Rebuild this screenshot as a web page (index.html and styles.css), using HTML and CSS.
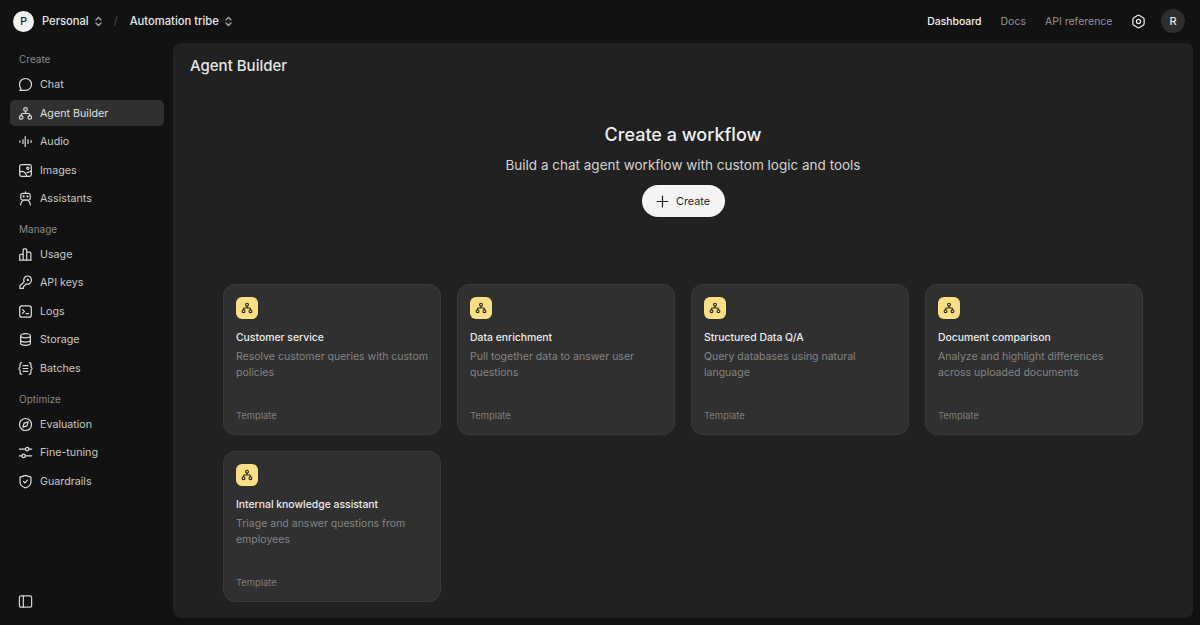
FILE: index.html
```html
<!DOCTYPE html>
<html lang="en">
<head>
<meta charset="utf-8">
<title>Agent Builder</title>
<link rel="stylesheet" href="styles.css">
</head>
<body>
<svg class="defs" width="0" height="0" aria-hidden="true">
  <symbol id="tree" viewBox="0 0 16 16"><circle cx="8" cy="3.6" r="1.9"/><circle cx="3.4" cy="12.2" r="1.9"/><circle cx="12.6" cy="12.2" r="1.9"/><path d="M8 5.5V8M3.4 10.3V9.2a1.2 1.2 0 0 1 1.2-1.2h6.8a1.2 1.2 0 0 1 1.2 1.2v1.1"/></symbol>
  <symbol id="updown" viewBox="0 0 12 12"><path d="M3.2 4.400 6 1.600l2.800 2.800M3.200 7.600 6 10.400l2.800-2.800"/></symbol>
</svg>
<header class="topbar">
  <div class="crumbs">
    <span class="avatar-p">P</span>
    <span class="crumb">Personal</span>
    <svg class="updown"><use href="#updown"/></svg>
    <span class="slash">/</span>
    <span class="crumb">Automation tribe</span>
    <svg class="updown"><use href="#updown"/></svg>
  </div>
  <nav class="toplinks">
    <a class="toplink active">Dashboard</a>
    <a class="toplink">Docs</a>
    <a class="toplink last">API reference</a>
    <svg class="gear" viewBox="0 0 16 16"><path d="M7 1.600a2 2 0 0 1 2 0l4 2.300a2 2 0 0 1 1 1.700v4.800a2 2 0 0 1-1 1.700l-4 2.300a2 2 0 0 1-2 0l-4-2.300a2 2 0 0 1-1-1.700V5.600a2 2 0 0 1 1-1.700Z"/><circle cx="8" cy="8" r="2.200"/></svg>
    <span class="avatar-r">R</span>
  </nav>
</header>
<div class="body">
  <aside class="sidebar">
    <div class="section">
      <div class="label">Create</div>
      <a class="item"><svg class="ico" viewBox="0 0 16 16"><path d="M8 1.600c3.600 0 6.400 2.800 6.400 6.300S11.600 14.300 8 14.300H2.200l1-2.100A6.300 6.300 0 0 1 1.600 7.900C1.600 4.400 4.400 1.600 8 1.600Z"/></svg>Chat</a>
      <a class="item selected"><svg class="ico"><use href="#tree"/></svg>Agent Builder</a>
      <a class="item"><svg class="ico" viewBox="0 0 16 16"><path d="M2 7.300v1.400M5.300 6v4M7.700 2.800v10.400M10.700 6v4M13.900 7v2"/></svg>Audio</a>
      <a class="item"><svg class="ico" viewBox="0 0 16 16"><rect x="1.800" y="1.800" width="12.400" height="12.400" rx="2"/><circle cx="10.500" cy="5.500" r="1.200"/><path d="M2 9.500c3-1.500 5.500-.5 7.500 4.500M9.500 10.500l4.500-2"/></svg>Images</a>
      <a class="item"><svg class="ico" viewBox="0 0 16 16"><rect x="3" y="2.600" width="10" height="7" rx="2"/><path d="M8 .8v1.800M2.800 14.800c.3-2.600 2-5.200 5.200-5.200s4.900 2.600 5.200 5.200"/><circle cx="6" cy="5.800" r=".5"/><circle cx="10" cy="5.800" r=".5"/></svg>Assistants</a>
    </div>
    <div class="section">
      <div class="label">Manage</div>
      <a class="item"><svg class="ico" viewBox="0 0 16 16"><path d="M1.800 14V8.800a1 1 0 0 1 1-1h2.700V14ZM5.500 14V3a1 1 0 0 1 1-1h1.800a1 1 0 0 1 1 1v11ZM9.300 14V5.500h3.400a1 1 0 0 1 1 1V14ZM1.500 14h12.500"/></svg>Usage</a>
      <a class="item"><svg class="ico" viewBox="0 0 16 16"><path d="M14.300 5.600a4.100 4.100 0 0 1-5.500 3.900L5.700 12.600v1.700H2v-2.600l4.600-4.600a4.100 4.100 0 1 1 7.700-1.500Z" stroke-linejoin="round"/><circle cx="10.500" cy="5.200" r=".6"/></svg>API keys</a>
      <a class="item"><svg class="ico" viewBox="0 0 16 16"><rect x="1.800" y="2" width="12.400" height="12" rx="2.400"/><path d="m4.800 6 2 2-2 2M8.600 10.200h2.600"/></svg>Logs</a>
      <a class="item"><svg class="ico" viewBox="0 0 16 16"><path d="M2.800 4c0-1.200 2.300-2.200 5.200-2.200s5.200 1 5.200 2.200v8c0 1.200-2.300 2.200-5.200 2.200s-5.200-1-5.200-2.200ZM2.800 4c0 1.200 2.300 2.200 5.200 2.200s5.200-1 5.200-2.200M2.800 8.600c0 1.200 2.300 2.200 5.200 2.200s5.200-1 5.200-2.200"/></svg>Storage</a>
      <a class="item"><svg class="ico" viewBox="0 0 16 16"><path d="M4 1.800c-1.700 0-1.800 1-1.800 2.200v1.600c0 1.200-.4 2.100-1.700 2.400 1.300.3 1.700 1.200 1.700 2.400V12c0 1.200.1 2.200 1.800 2.200M12 1.800c1.700 0 1.800 1 1.800 2.200v1.600c0 1.200.4 2.100 1.700 2.400-1.300.3-1.700 1.200-1.700 2.400V12c0 1.200-.1 2.200-1.800 2.200M5.400 5h5.200M5.400 8h5.200M5.400 11h5.200"/></svg>Batches</a>
    </div>
    <div class="section">
      <div class="label">Optimize</div>
      <a class="item"><svg class="ico" viewBox="0 0 16 16"><circle cx="8" cy="8" r="6.400"/><path d="m10.800 5.200-1.300 4.300-4.300 1.300 1.300-4.300Z" stroke-linejoin="round"/></svg>Evaluation</a>
      <a class="item"><svg class="ico" viewBox="0 0 16 16"><circle cx="9.800" cy="4.400" r="1.800"/><circle cx="6" cy="11.600" r="1.800"/><path d="M1.500 4.400h6.500M11.600 4.400h3M1.500 11.600h2.700M7.800 11.600h6.800"/></svg>Fine-tuning</a>
      <a class="item"><svg class="ico" viewBox="0 0 16 16"><path d="M8 1.400 13.800 3.400v5c0 3-2.500 5.200-5.800 6.400-3.300-1.200-5.800-3.400-5.800-6.400v-5Z" stroke-linejoin="round"/><path d="m5.900 8 1.500 1.500 2.700-2.900"/></svg>Guardrails</a>
    </div>
    <svg class="collapse" viewBox="0 0 16 16"><rect x="1.500" y="2" width="13" height="12" rx="1.500"/><path d="M5.700 2v12"/></svg>
  </aside>
  <main class="main">
    <h1 class="page-title">Agent Builder</h1>
    <section class="hero">
      <h2 class="hero-title">Create a workflow</h2>
      <p class="hero-sub">Build a chat agent workflow with custom logic and tools</p>
      <button class="create"><svg class="plus" viewBox="0 0 14 14"><path d="M7 1.200v11.600M1.200 7h11.600"/></svg>Create</button>
    </section>
    <section class="grid">
      <article class="card"><span class="badge"><svg class="badge-ico"><use href="#tree"/></svg></span><h3 class="card-title">Customer service</h3><p class="card-desc">Resolve customer queries with custom policies</p><span class="card-tag">Template</span></article>
      <article class="card"><span class="badge"><svg class="badge-ico"><use href="#tree"/></svg></span><h3 class="card-title">Data enrichment</h3><p class="card-desc">Pull together data to answer user questions</p><span class="card-tag">Template</span></article>
      <article class="card"><span class="badge"><svg class="badge-ico"><use href="#tree"/></svg></span><h3 class="card-title">Structured Data Q/A</h3><p class="card-desc">Query databases using natural language</p><span class="card-tag">Template</span></article>
      <article class="card"><span class="badge"><svg class="badge-ico"><use href="#tree"/></svg></span><h3 class="card-title">Document comparison</h3><p class="card-desc">Analyze and highlight differences across uploaded documents</p><span class="card-tag">Template</span></article>
      <article class="card"><span class="badge"><svg class="badge-ico"><use href="#tree"/></svg></span><h3 class="card-title">Internal knowledge assistant</h3><p class="card-desc">Triage and answer questions from employees</p><span class="card-tag">Template</span></article>
    </section>
  </main>
</div>
</body>
</html>
```
FILE: styles.css
```css
* { box-sizing: border-box; }
html, body { margin: 0; height: 100%; }
body {
  background: #121212;
  color: #e8e8e8;
  font-family: Inter, "Liberation Sans", sans-serif;
  font-size: 11px;
  overflow: hidden;
  display: flex;
  flex-direction: column;
}
.defs { position: absolute; }
svg { fill: none; stroke: currentColor; stroke-width: 1.3; stroke-linecap: round; flex: none; }

.topbar { height: 43px; flex: none; display: flex; align-items: center; justify-content: space-between; padding: 0 15px 1px 13px; }
.crumbs { display: flex; align-items: center; }
.avatar-p { width: 21px; height: 21px; border-radius: 50%; background: #f2f2f2; color: #151515; display: flex; align-items: center; justify-content: center; font-size: 10.5px; font-weight: 500; margin-right: 8px; }
.crumb { font-size: 11.2px; font-weight: 450; color: #e6e6e6; }
.updown { width: 11px; height: 11px; color: #a8a8a8; margin-left: 4px; }
.slash { color: #4a4a4a; margin: 0 12px 0 10px; font-size: 11px; }
.toplinks { display: flex; align-items: center; }
.toplink { font-size: 10.5px; color: #929292; margin-right: 19px; }
.toplink.active { color: #f2f2f2; font-weight: 450; font-size: 10.4px; }
.toplink.last { margin-right: 18px; }
.gear { width: 15px; height: 15px; color: #f0f0f0; margin-right: 15.5px; }
.avatar-r { width: 24px; height: 24px; border-radius: 50%; background: #2e2e2e; color: #e6e6e6; display: flex; align-items: center; justify-content: center; font-size: 11px; font-weight: 450; }

.body { flex: 1; display: flex; min-height: 0; padding-bottom: 7px; padding-right: 7px; }
.sidebar { width: 173px; flex: none; padding: 7px 9px 0 10px; display: flex; flex-direction: column; gap: 8.25px; position: relative; }
.section { display: flex; flex-direction: column; gap: 2.5px; }
.label { height: 20px; line-height: 18px; padding-left: 9px; font-size: 10px; color: #8a8a8a; margin-bottom: -1px; }
.item { height: 26px; display: flex; align-items: center; gap: 7px; padding-left: 8px; border-radius: 5px; font-size: 10.7px; color: #c8c8c8; }
.item.selected { background: #303030; color: #e0e0e0; }
.ico { width: 15px; height: 15px; color: #dcdcdc; }
.collapse { position: absolute; left: 18px; bottom: 9px; width: 15px; height: 15px; color: #d0d0d0; }

.main { flex: 1; min-width: 0; background: #212121; border-radius: 8px; padding: 14px 50px 0; display: flex; flex-direction: column; }
.page-title { margin: 0 0 0 -33px; font-size: 15px; line-height: 18px; font-weight: 500; color: #e6e6e6; }
.hero { display: flex; flex-direction: column; align-items: center; margin-top: 48px; }
.hero-title { margin: 0; font-size: 18px; line-height: 24px; font-weight: 500; color: #f0f0f0; }
.hero-sub { margin: 8px 0 0; font-size: 13.5px; line-height: 20px; color: #d2d2d2; }
.create { margin-top: 10px; width: 83px; height: 32px; border: 0; border-radius: 16px; background: #f4f4f4; color: #1e1e1e; font: 400 10.8px Inter, "Liberation Sans", sans-serif; display: flex; align-items: center; justify-content: center; gap: 7px; padding: 0; }
.plus { width: 13px; height: 13px; color: #1e1e1e; }
.grid { margin-top: 67px; display: grid; grid-template-columns: repeat(4, 1fr); gap: 16px; }
.card { height: 151px; background: #303030; border: 1px solid #3a3a3a; border-radius: 12px; padding: 12px 8px 11.5px 12px; display: flex; flex-direction: column; }
.badge { width: 22px; height: 22px; border-radius: 6px; background: #fbdf87; color: #2a2413; display: flex; align-items: center; justify-content: center; flex: none; }
.badge-ico { width: 12px; height: 12px; stroke-width: 1.5; }
.card-title { margin: 10.5px 0 0; font-size: 10.4px; line-height: 16px; font-weight: 450; color: #ededed; }
.card-desc { margin: 3px 0 0; font-size: 10.5px; line-height: 16px; color: #858585; flex: 1; }
.card-tag { font-size: 9.4px; line-height: 14px; color: #7c7c7c; }
```
